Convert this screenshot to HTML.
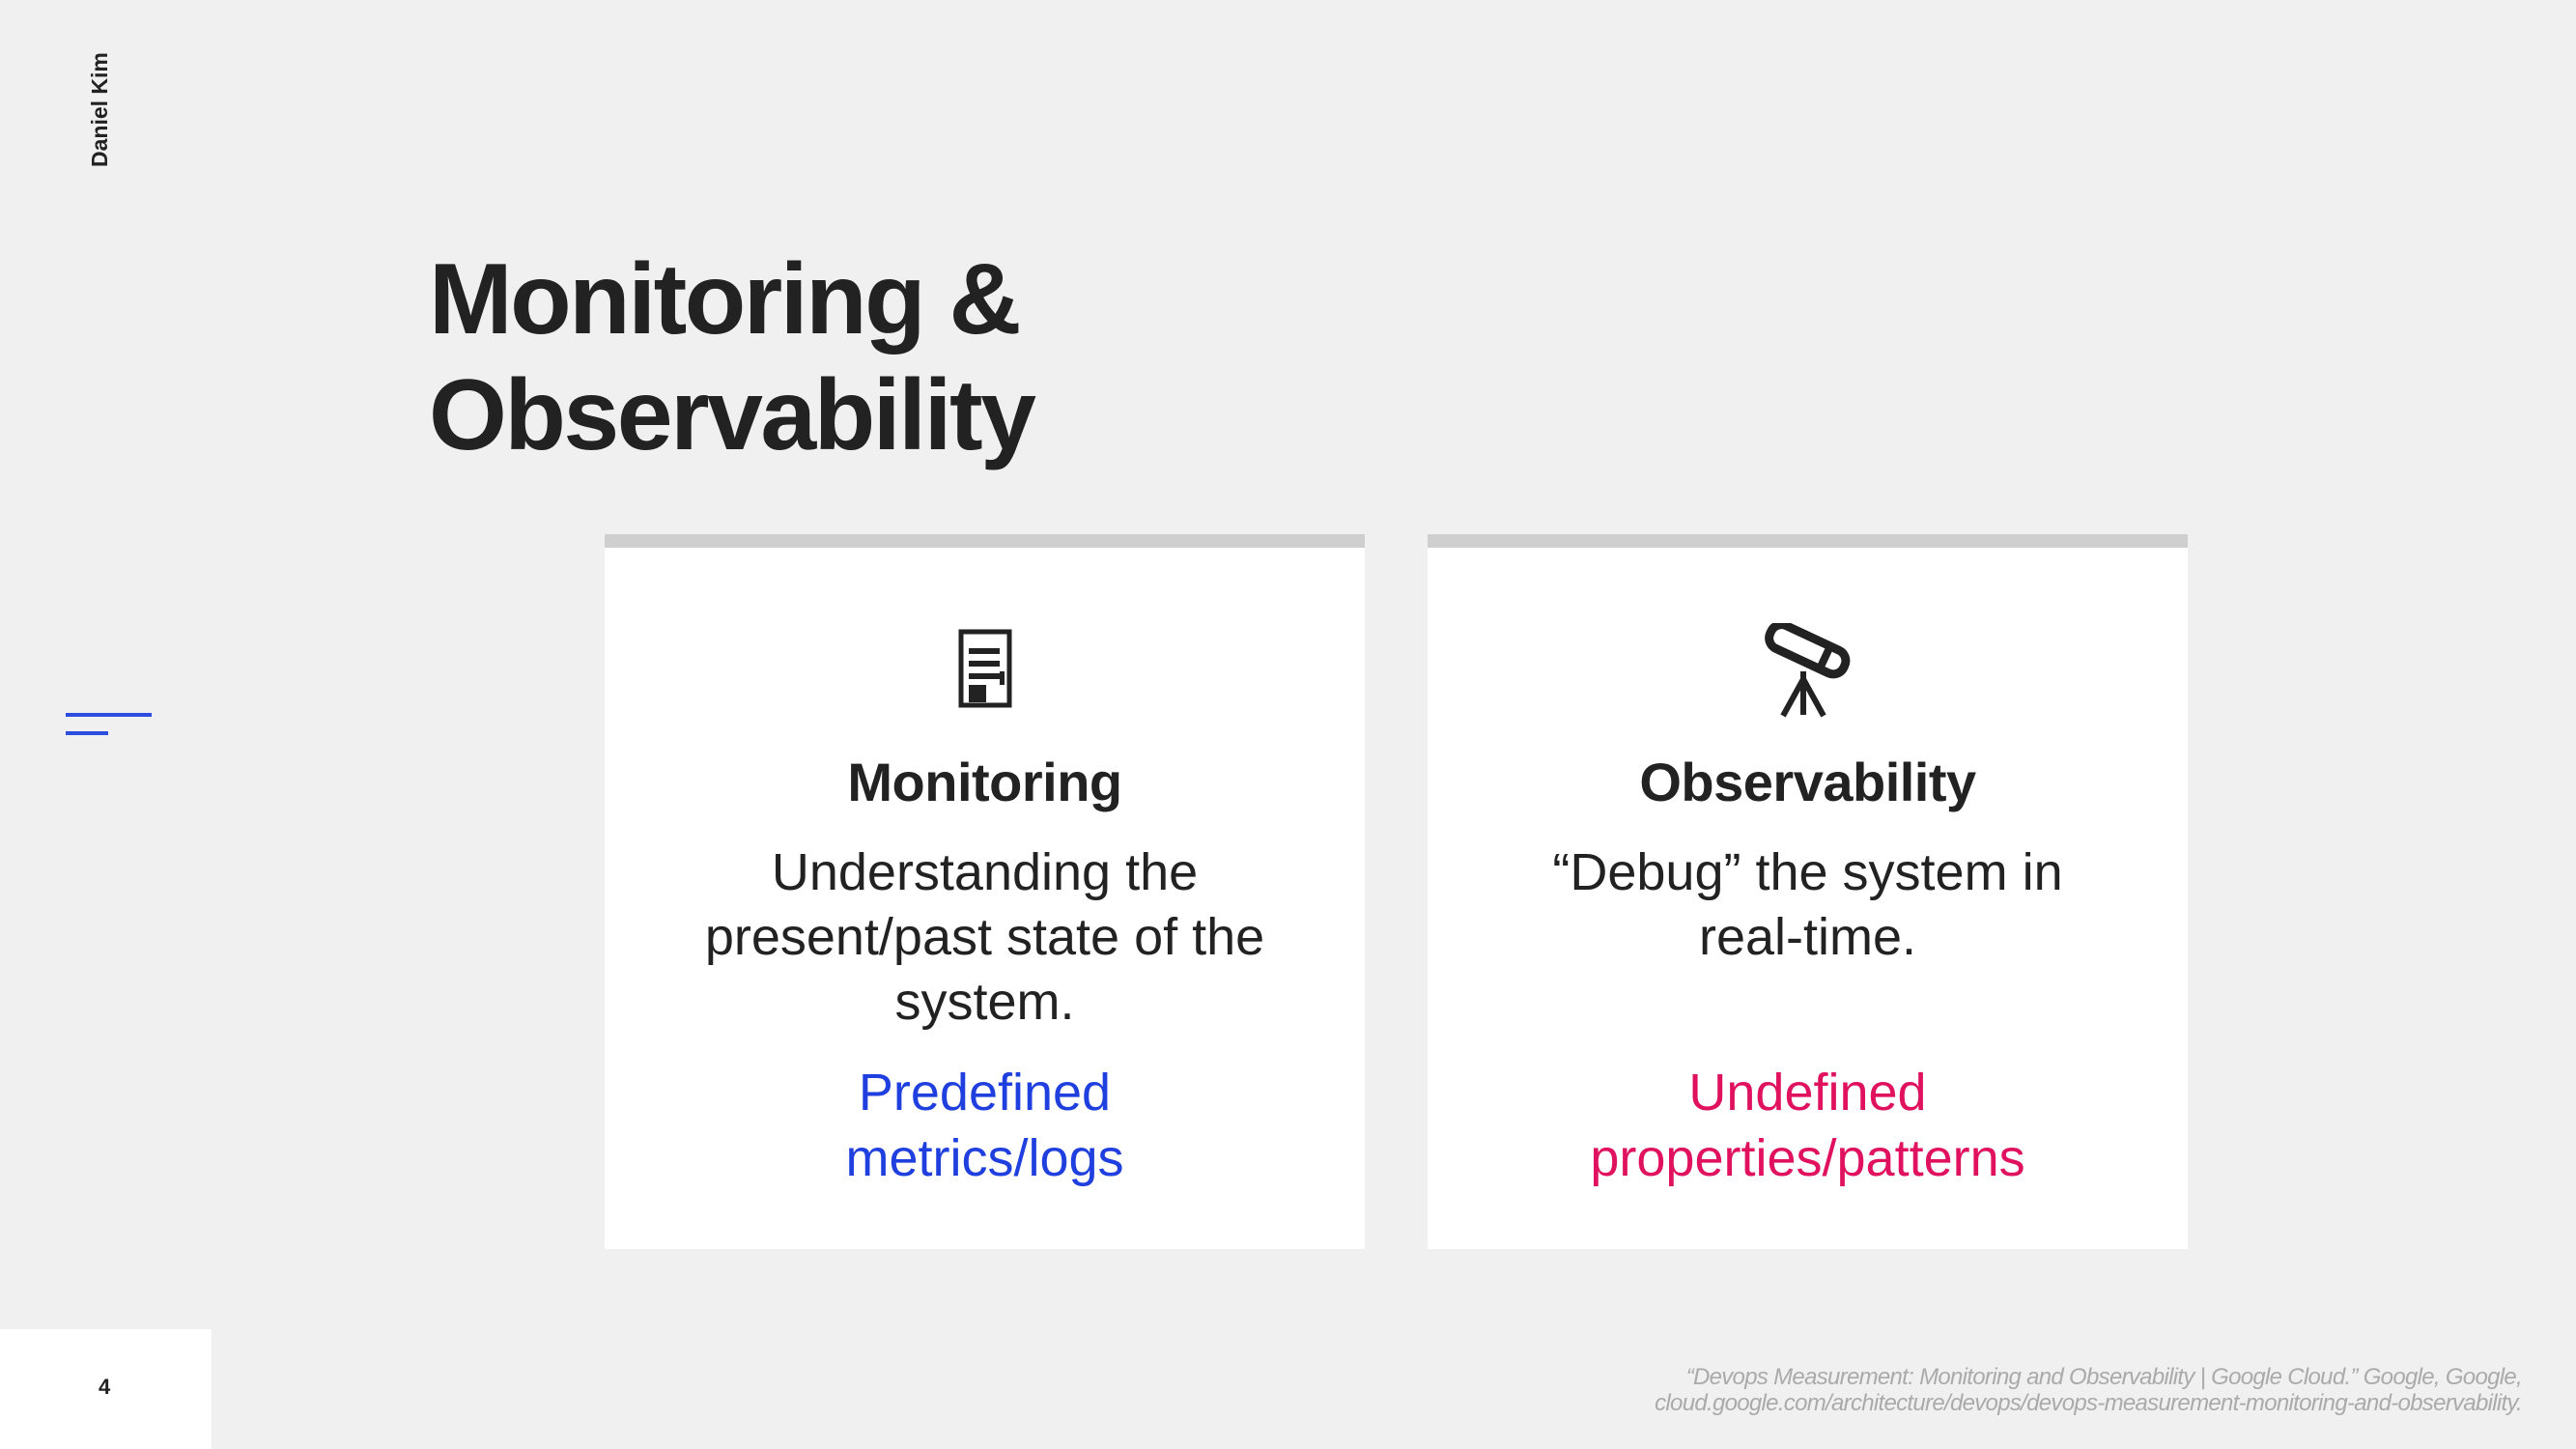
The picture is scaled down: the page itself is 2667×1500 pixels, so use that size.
<!DOCTYPE html>
<html><head><style>
html,body{margin:0;padding:0}
body{width:2667px;height:1500px;background:#f0f0f0;position:relative;overflow:hidden;font-family:"Liberation Sans",sans-serif;color:#222}
.abs{position:absolute}
.author{left:90px;top:173px;transform:rotate(-90deg);transform-origin:left top;font-size:23px;font-weight:bold;width:200px}
.title{left:444px;top:250px;font-size:104px;font-weight:bold;line-height:120px;letter-spacing:-2.5px;color:#222}
.card{top:553px;width:787px;height:740px;background:#fff;border-top:14px solid #cfcfcf;box-sizing:border-box;text-align:center}
.h{position:absolute;left:0;right:0;top:210px;font-size:56px;font-weight:bold;letter-spacing:-0.5px}
.b{position:absolute;left:0;right:0;top:303px;font-size:54px;line-height:67px;letter-spacing:0;white-space:nowrap}
.c{position:absolute;left:0;right:0;top:530px;font-size:54px;line-height:68px}
.cite{right:56px;top:1412px;text-align:right;font-size:24px;font-style:italic;color:#aaa;line-height:27px;letter-spacing:-0.7px}
</style></head><body>
<div class="abs author">Daniel Kim</div>
<div class="abs title">Monitoring &amp;<br>Observability</div>
<div class="abs" style="left:68px;top:738px;width:89px;height:4px;background:#2b4de0"></div>
<div class="abs" style="left:68px;top:757px;width:44px;height:4px;background:#2b4de0"></div>

<div class="abs card" style="left:626px">
<svg class="abs" style="left:366px;top:84px" width="56" height="82" viewBox="0 0 56 82">
<rect x="3" y="3" width="50" height="76" fill="none" stroke="#222" stroke-width="5"/>
<rect x="11" y="20" width="32" height="6" fill="#222"/>
<rect x="11" y="33" width="32" height="6" fill="#222"/>
<rect x="11" y="46" width="32" height="6" fill="#222"/>
<rect x="11" y="58" width="18" height="18" fill="#222"/>
<rect x="43" y="44" width="5" height="14" fill="#222"/>
</svg>
<div class="h">Monitoring</div>
<div class="b">Understanding the<br>present/past state of the<br>system.</div>
<div class="c" style="color:#1f3fde">Predefined<br>metrics/logs</div>
</div>

<div class="abs card" style="left:1478px">
<svg class="abs" style="left:342px;top:78px" width="100" height="100" viewBox="0 0 100 100">
<g transform="rotate(25 50 30)">
<rect x="8" y="14" width="84" height="26" rx="12" fill="none" stroke="#222" stroke-width="9"/>
<rect x="66" y="16" width="8" height="22" fill="#222"/>
</g>
<line x1="47" y1="50" x2="47" y2="95" stroke="#222" stroke-width="6"/>
<line x1="47" y1="58" x2="26" y2="96" stroke="#222" stroke-width="6"/>
<line x1="47" y1="58" x2="68" y2="96" stroke="#222" stroke-width="6"/>
</svg>
<div class="h">Observability</div>
<div class="b">“Debug” the system in<br>real-time.</div>
<div class="c" style="color:#e0115f">Undefined<br>properties/patterns</div>
</div>

<div class="abs" style="left:0;top:1376px;width:219px;height:124px;background:#fff"></div>
<div class="abs" style="left:102px;top:1423px;font-size:22px;font-weight:bold">4</div>
<div class="abs cite">“Devops Measurement: Monitoring and Observability | Google Cloud.” Google, Google,<br>cloud.google.com/architecture/devops/devops-measurement-monitoring-and-observability.</div>
</body></html>
